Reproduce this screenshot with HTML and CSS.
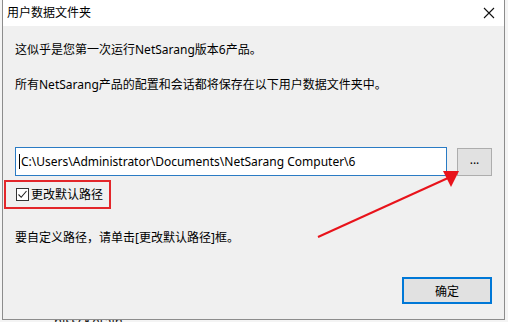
FILE: index.html
```html
<!DOCTYPE html>
<html lang="zh-CN">
<head>
    <meta charset="UTF-8">
    <title>用户数据文件夹</title>
    <link rel="stylesheet" href="styles.css">
</head>
<body>
    <div class="backdrop">
        <span class="bg-name">hisscKetain</span>
    </div>

    <div class="dialog">
        <div class="titlebar">
            <span class="title">用户数据文件夹</span>
            <svg class="close" width="12" height="12" viewBox="0 0 12 12">
                <path d="M1 1 L11 11 M11 1 L1 11" stroke="#111" stroke-width="1.1" fill="none"/>
            </svg>
        </div>

        <div class="content">
            <p class="line first">这似乎是您第一次运行NetSarang版本6产品。</p>
            <p class="line second">所有NetSarang产品的配置和会话都将保存在以下用户数据文件夹中。</p>

            <div class="path-row">
                <div class="path-input"><span class="caret"></span>C:\Users\Administrator\Documents\NetSarang Computer\6</div>
                <button class="browse-btn">...</button>
            </div>

            <div class="highlight">
                <span class="checkbox">
                    <svg width="11" height="11" viewBox="0 0 11 11">
                        <path d="M1.5 5.5 L4.2 8.3 L9.5 2" stroke="#222" stroke-width="1.1" fill="none"/>
                    </svg>
                </span>
                <span class="check-label">更改默认路径</span>
            </div>

            <p class="line hint">要自定义路径，请单击[更改默认路径]框。</p>

            <div class="actions">
                <button class="ok-btn">确定</button>
            </div>
        </div>
    </div>

    <svg class="arrow" width="508" height="322" viewBox="0 0 508 322">
        <line x1="318" y1="237" x2="448" y2="178" stroke="#e8131b" stroke-width="2"/>
        <polygon points="459,171 443,171 451,187" fill="#e8131b"/>
    </svg>
</body>
</html>
```

FILE: styles.css
```css
* {
    box-sizing: border-box;
    margin: 0;
    padding: 0;
}

body {
    width: 508px;
    height: 322px;
    overflow: hidden;
    position: relative;
    background-color: #f4f4f4;
    font-family: "Noto Sans", "Noto Sans CJK SC", sans-serif;
    font-size: 12px;
    color: #000;
}

/* window behind the dialog, only its top edge shows */
.backdrop {
    position: absolute;
    left: 54px;
    top: 313px;
    font-size: 13px;
    line-height: 16px;
    color: #222;
}

.dialog {
    position: relative;
    margin-left: 2px;
    width: 503px;
    height: 320px;
    border: 1px solid #8c8c8c;
    border-top: none;
    background-color: #f0f0f0;
    display: flex;
    flex-direction: column;
}

.titlebar {
    height: 26px;
    background-color: #fff;
    display: flex;
    align-items: center;
    justify-content: space-between;
    padding: 0 9px 0 4px;
}

.title {
    line-height: 16px;
}

.close {
    display: block;
}

.content {
    padding: 16px 12px 0 12px;
    display: flex;
    flex-direction: column;
}

.line {
    line-height: 16px;
    white-space: nowrap;
}

.second {
    margin-top: 19px;
}

.path-row {
    margin-top: 54px;
    display: flex;
    align-items: flex-start;
    gap: 10px;
}

.path-input {
    width: 432px;
    height: 29px;
    border: 1px solid #2a7bc4;
    background-color: #fff;
    display: flex;
    align-items: center;
    padding-left: 3px;
    white-space: nowrap;
    font-size: 12px;
}

.caret {
    width: 1px;
    height: 15px;
    background-color: #000;
    margin-right: 1px;
}

.browse-btn {
    margin-top: 1px;
    width: 35px;
    height: 28px;
    border: 1px solid #adadad;
    background-color: #e1e1e1;
    font-family: inherit;
    font-size: 12px;
    line-height: 20px;
    padding-bottom: 4px;
}

.highlight {
    margin: 4px 0 0 -11px;
    width: 107px;
    height: 29px;
    border: 2px solid #e3262a;
    display: flex;
    align-items: center;
    padding-left: 10px;
    gap: 2px;
}

.checkbox {
    width: 13px;
    height: 13px;
    border: 1px solid #333;
    background-color: #fff;
    display: flex;
    align-items: center;
    justify-content: center;
}

.checkbox svg {
    display: block;
}

.check-label {
    line-height: 16px;
}

.hint {
    margin-top: 21px;
}

.actions {
    margin-top: 31px;
    display: flex;
    justify-content: flex-end;
}

.ok-btn {
    width: 90px;
    height: 27px;
    border: 2px solid #0078d7;
    background-color: #e1e1e1;
    font-family: inherit;
    font-size: 12px;
}

.arrow {
    position: absolute;
    left: 0;
    top: 0;
    pointer-events: none;
}
```
